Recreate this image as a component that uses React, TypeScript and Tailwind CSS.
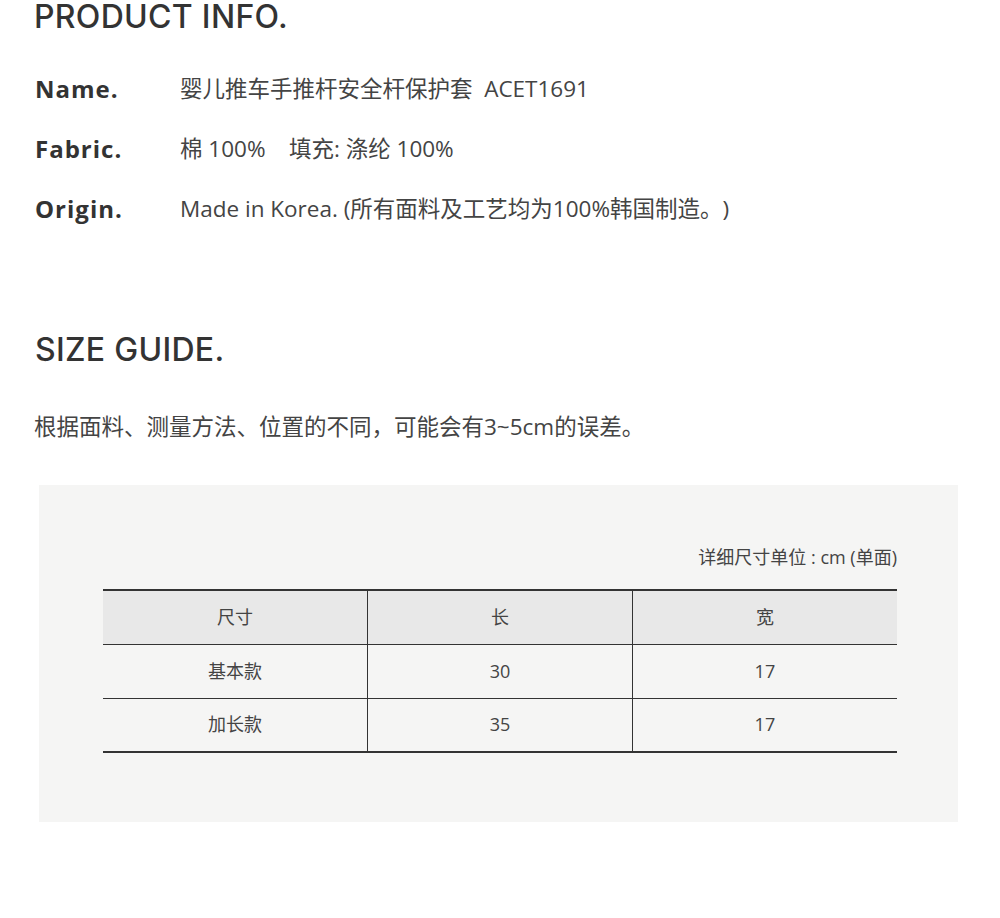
export default function App() {
  const info = [
    { label: "Name.", value: "婴儿推车手推杆安全杆保护套\u00a0\u00a0ACET1691" },
    { label: "Fabric.", value: "棉 100%\u00a0\u00a0\u00a0\u00a0填充: 涤纶 100%" },
    { label: "Origin.", value: "Made in Korea. (所有面料及工艺均为100%韩国制造。)" },
  ];
  const rows = [
    ["基本款", "30", "17"],
    ["加长款", "35", "17"],
  ];
  const cjk = "font-['Open_Sans','Noto_Sans_CJK_SC',sans-serif] [text-spacing-trim:space-all]";

  return (
    <div className="w-[1000px] h-[918px] bg-white text-[#333]">
      <div className="pl-[34px]">
        <h2 className="font-['Inter',sans-serif] font-medium text-[32px] leading-[34px] tracking-[0.3px] text-[#333]">
          PRODUCT INFO.
        </h2>
        <div className="mt-[39px] flex flex-col gap-[28px]">
          {info.map((r) => (
            <div key={r.label} className="flex items-center h-[32px]">
              <div className="w-[146px] pl-[1px] font-['Open_Sans',sans-serif] font-bold text-[24px] tracking-[1px] text-[#333]">
                {r.label}
              </div>
              <div className={`${cjk} text-[22.5px] text-[#444]`}>{r.value}</div>
            </div>
          ))}
        </div>

        <h2 className="mt-[108px] pl-[1px] font-['Inter',sans-serif] font-medium text-[32px] leading-[34px] tracking-[0.3px] text-[#333]">
          SIZE GUIDE.
        </h2>
        <p className={`mt-[44px] ${cjk} text-[22.5px] leading-[32px] text-[#444]`}>
          根据面料、测量方法、位置的不同，可能会有3~5cm的误差。
        </p>
      </div>

      <div className="mt-[42px] ml-[39px] w-[919px] h-[337px] bg-[#f5f5f4] pt-[57px] pl-[64px] pr-[61px]">
        <div className={`text-right ${cjk} text-[18px] leading-[30px] text-[#444]`}>
          详细尺寸单位 : cm (单面)
        </div>
        <table className={`mt-[17px] w-full border-collapse ${cjk} text-[18px] text-[#444]`}>
          <thead>
            <tr className="bg-[#e8e8e8] border-t-[2px] border-[#333]">
              {["尺寸", "长", "宽"].map((h, i) => (
                <th
                  key={h}
                  className={`w-1/3 h-[54px] font-normal border-b border-[#333] ${i > 0 ? "border-l" : ""}`}
                >
                  {h}
                </th>
              ))}
            </tr>
          </thead>
          <tbody>
            {rows.map((r, ri) => (
              <tr key={ri} className={ri === rows.length - 1 ? "border-b-[2px] border-[#333]" : "border-b border-[#333]"}>
                {r.map((c, i) => (
                  <td key={i} className={`h-[54px] text-center border-[#333] ${i > 0 ? "border-l" : ""}`}>
                    {c}
                  </td>
                ))}
              </tr>
            ))}
          </tbody>
        </table>
      </div>
    </div>
  );
}
